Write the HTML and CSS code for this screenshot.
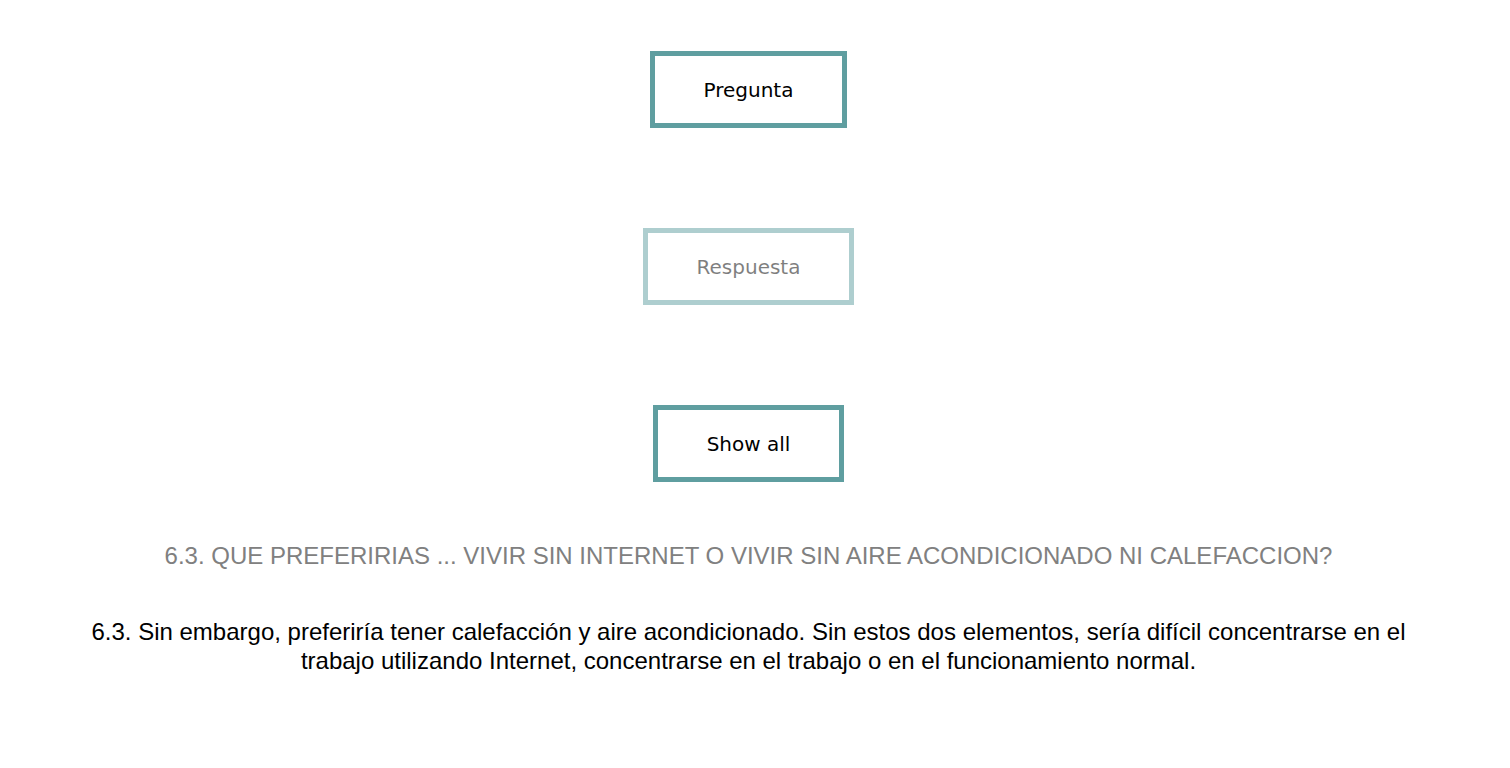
FILE: index.html
```html
<!DOCTYPE html>
<html lang="es">
<head>
<meta charset="utf-8">
<title>Pregunta</title>
<link rel="stylesheet" href="styles.css">
</head>
<body>
<main class="page">
  <div class="controls">
    <button class="btn">Pregunta</button>
    <button class="btn btn-disabled">Respuesta</button>
    <button class="btn">Show all</button>
  </div>
  <h2 class="question">6.3. QUE PREFERIRIAS ... VIVIR SIN INTERNET O VIVIR SIN AIRE ACONDICIONADO NI CALEFACCION?</h2>
  <p class="answer">6.3. Sin embargo, preferiría tener calefacción y aire acondicionado. Sin estos dos elementos, sería difícil concentrarse en el trabajo utilizando Internet, concentrarse en el trabajo o en el funcionamiento normal.</p>
</main>
</body>
</html>
```

FILE: styles.css
```css
html, body {
  margin: 0;
  padding: 0;
  background: #ffffff;
}

.page {
  width: 1497px;
  box-sizing: border-box;
  padding: 51px 80px 0 80px;
  text-align: center;
  font-family: "Liberation Sans", Arial, sans-serif;
}

.controls {
  display: flex;
  flex-direction: column;
  align-items: center;
  gap: 100px;
}

.btn {
  font-family: "DejaVu Sans", Tahoma, sans-serif;
  font-size: 20px;
  line-height: 25px;
  color: #000000;
  background: #ffffff;
  border: 5px solid #5f9ea0;
  padding: 22px 49px 20px;
  cursor: pointer;
}

.btn-disabled {
  opacity: 0.5;
}

.question {
  margin: 60px 0 0 0;
  font-size: 24px;
  font-weight: normal;
  line-height: 28px;
  color: #808080;
}

.answer {
  margin: 47px 0 0 0;
  font-size: 24px;
  line-height: 29px;
  color: #000000;
}
```
